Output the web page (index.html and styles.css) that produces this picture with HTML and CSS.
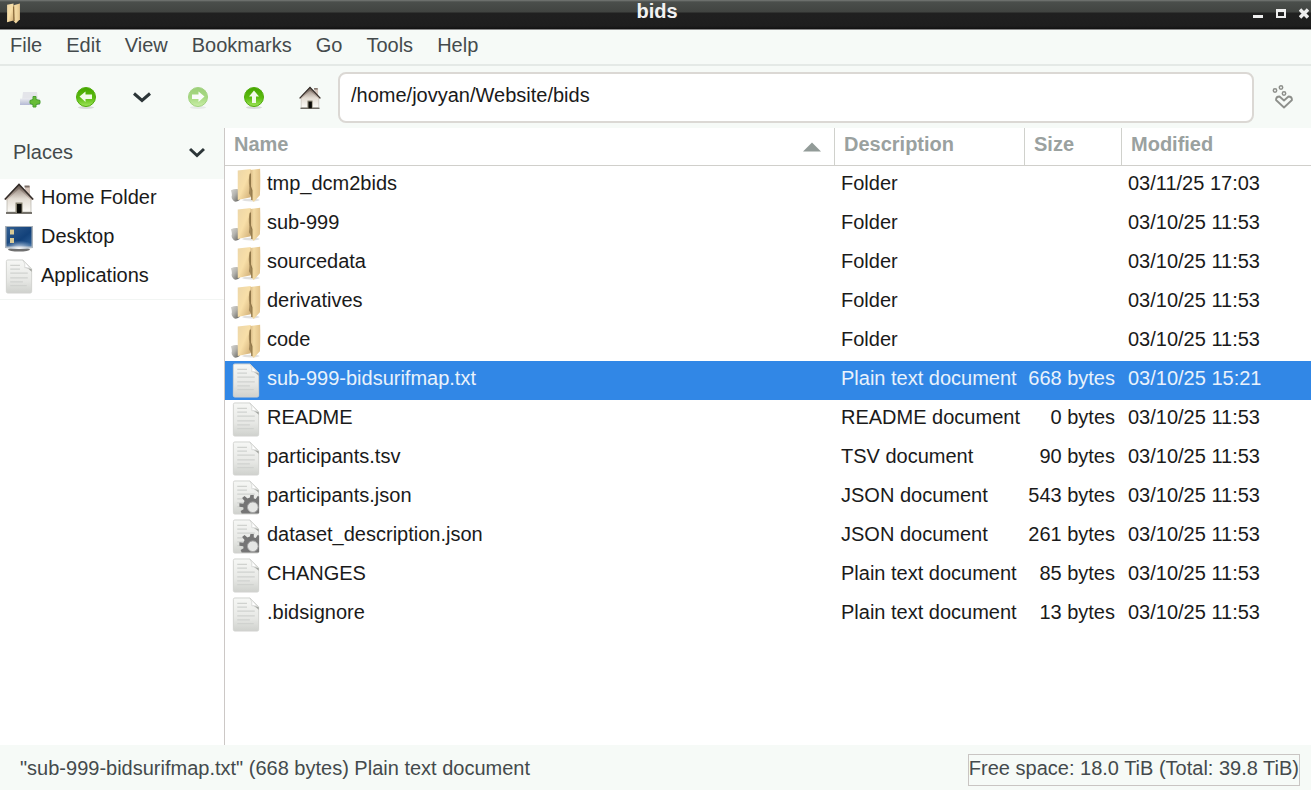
FILE: index.html
```
<!DOCTYPE html>
<html lang="en">
<head>
<meta charset="utf-8">
<title>bids</title>
<link rel="stylesheet" href="styles.css">
</head>
<body>
<svg class="defs" aria-hidden="true">
  <defs>
    <linearGradient id="wood" x1="0" y1="0" x2="1" y2="1"><stop offset="0" stop-color="#ecd6a8"/><stop offset=".5" stop-color="#f8dfa8"/><stop offset="1" stop-color="#cdaa72"/></linearGradient>
    <linearGradient id="woodDark" x1="0" y1="0" x2="1" y2="0"><stop offset="0" stop-color="#d9bb87"/><stop offset=".35" stop-color="#f3dba5"/><stop offset="1" stop-color="#e2c28a"/></linearGradient>
    <linearGradient id="ball" x1="0" y1="0" x2="1" y2="1"><stop offset="0" stop-color="#d6d5d1"/><stop offset=".45" stop-color="#b3b2ad"/><stop offset="1" stop-color="#5c5b57"/></linearGradient>
    <linearGradient id="paper" x1="0" y1="0" x2="0" y2="1"><stop offset="0" stop-color="#f6f7f5"/><stop offset=".6" stop-color="#e7e8e5"/><stop offset="1" stop-color="#cfd1cd"/></linearGradient>
    <linearGradient id="green" x1="0" y1="0" x2="0" y2="1"><stop offset="0" stop-color="#45a500"/><stop offset=".55" stop-color="#5cbc10"/><stop offset="1" stop-color="#a0e55c"/></linearGradient>
    <linearGradient id="roof" x1="0" y1="0" x2="0" y2="1"><stop offset="0" stop-color="#5e5149"/><stop offset="1" stop-color="#d5c5bb"/></linearGradient>
    <linearGradient id="wall" x1="0" y1="0" x2="0" y2="1"><stop offset="0" stop-color="#8d7d73"/><stop offset=".5" stop-color="#e4ddd4"/><stop offset="1" stop-color="#fbfaf6"/></linearGradient>
    <linearGradient id="screen" x1="0" y1="0" x2="1" y2="1"><stop offset="0" stop-color="#335f91"/><stop offset=".6" stop-color="#12417a"/><stop offset="1" stop-color="#2e6199"/></linearGradient>
    <radialGradient id="glow" cx=".5" cy="1" r=".6"><stop offset="0" stop-color="#fff"/><stop offset="1" stop-color="#b8cce2" stop-opacity="0"/></radialGradient>
    <linearGradient id="tray" x1="0" y1="0" x2="0" y2="1"><stop offset="0" stop-color="#e9eaf0"/><stop offset=".5" stop-color="#cfd2e0"/><stop offset="1" stop-color="#b4b9d6"/></linearGradient>
  </defs>
  <symbol id="folder" viewBox="0 0 30 36">
    <ellipse cx="20" cy="33" rx="9" ry="1.500" fill="#000" opacity=".12"/>
    <path d="M-.5 23q4-2 9-1v11q-5 3.500-7 0-2-2-1-5 0-2-1-5z" fill="url(#ball)"/>
    <path d="M6.500 2.500 20 1v29L6.500 33z" fill="url(#wood)"/>
    <path d="M19.500 5q-2 4-1.500 11 1 3 0 10l3 5V5z" fill="#a08658"/>
    <path d="M19.500 2 29.500 .7q.5 14-.2 27.300L23 35l-2-2V23l-1.500-3z" fill="url(#woodDark)"/>
    <path d="M19.500 6v13l1.500 4v10" fill="none" stroke="#8f7648" stroke-width="1.300"/>
  </symbol>
  <symbol id="file" viewBox="0 0 28 36">
    <path d="M1 2.500Q1 1 2.500 1H18l9 9v23.500q0 1.500-1.500 1.500h-23Q1 35 1 33.500z" fill="url(#paper)" stroke="#d2d3d0"/>
    <path d="M18 1q3 4 2 8 4-1 7 2z" fill="#fff" stroke="#d0d1ce" stroke-width=".7"/>
    <path d="m19.500 8.500 7.500 2v2.500q-3-3.500-7.500-4.500z" fill="#777a75" opacity=".6"/>
    <path d="M5 6.500h10M5 10.500h10M5 14.500h18M5 19.500h18M5 23.500h13M5 27.500h17" stroke="#d0d2cf" stroke-width="1.300"/>
  </symbol>
  <symbol id="gearfile" viewBox="0 0 28 36">
    <use href="#file"/>
    <path d="M18.500 15.500h3.500v3.500l2 .5 2-3 1.500.5V34q0 .5-1 .5H9.500l-1-2.500 3-2-.3-2-4-.5v-3.500l4 .5 1.300-3-2.500-3 2.500-2 3 2.500 2.500-1z" fill="#757575"/>
    <circle cx="21" cy="28" r="5.500" fill="#e5e6e4" stroke="#a2a2a2"/>
  </symbol>
  <symbol id="house" viewBox="0 0 30 32">
    <path d="M21 3h5v9h-5z" fill="#d5c5bb"/><path d="M20.500 2.500h5v2h-5z" fill="#7b6e67"/>
    <path d="M3 14 15 3l12 12v14H3z" fill="url(#wall)" stroke="#aaa49b" stroke-width=".6"/>
    <path d="M15 1 .5 16l2 1.500L15 6l12.500 11.500 2-1.500z" fill="url(#roof)"/>
    <path d="M.8 16.500 15 1.500l14.200 15" fill="none" stroke="#342d29" stroke-width="1.600"/>
    <path d="M2 30h26" stroke="#56524a" stroke-width="1.600"/>
    <path d="M11.500 19.500h7V30h-7z" fill="#85806f"/><path d="M13 21h4.500v9H13z" fill="#090906"/>
  </symbol>
  <symbol id="desktop" viewBox="0 0 30 28">
    <ellipse cx="15" cy="25.500" rx="11" ry="2" fill="#333" opacity=".7"/>
    <path d="M1 2h28v22q-14 2-28 0z" fill="#a9b1b8"/>
    <path d="M2.500 3h25v19.500h-25z" fill="url(#screen)"/>
    <path d="M1 11h28v13q-14 2-28 0z" fill="url(#glow)"/>
    <path d="M6 5.500h4v5H6zM6 14h4v5H6z" fill="#d9ca96"/>
  </symbol>
  <symbol id="orb" viewBox="0 0 22 24">
    <ellipse cx="11" cy="21.500" rx="8" ry="1.500" fill="#000" opacity=".12"/>
    <circle cx="11" cy="11" r="9.500" fill="url(#green)" stroke="#50ad0b"/>
  </symbol>
</svg>

<div class="window">
  <header class="titlebar">
    <svg class="title-icon" viewBox="6 0 24 36" aria-hidden="true"><path d="M7 3 18 1v29L7 33z" fill="url(#wood)"/><path d="M18 4 29 1v27l-7 7-4-4z" fill="url(#woodDark)"/><path d="m18 6 1 25" stroke="#8c6c3c" stroke-width="2"/></svg>
    <h1 class="title">bids</h1>
    <div class="window-buttons">
      <button aria-label="Minimize"><svg width="10" height="12"><path d="M0 8h10v3H0z" fill="#eee"/></svg></button>
      <button aria-label="Maximize"><svg width="10" height="12"><path d="M1 4h8v6H1z" fill="none" stroke="#eee" stroke-width="2"/><path d="M0 2h10v2H0z" fill="#eee"/></svg></button>
      <button aria-label="Close"><svg width="10" height="12"><path d="m1 2.500 8 8m0-8-8 8" stroke="#eee" stroke-width="3.500"/></svg></button>
    </div>
  </header>

  <nav class="menubar" aria-label="Menu">
    <button>File</button><button>Edit</button><button>View</button><button>Bookmarks</button><button>Go</button><button>Tools</button><button>Help</button>
  </nav>

  <div class="toolbar">
    <div class="tools">
      <button aria-label="New tab"><svg width="22" height="24"><path d="M4 6h14l1 8H3z" fill="#e4e5ea"/><path d="M1 12.500h20V19H1z" fill="url(#tray)"/><path d="M14 10.500h3v3l4 1v3l-4 1v2.500h-3V18.500l-3-1v-3l3-1z" fill="#68bd37" stroke="#4a9f30"/></svg></button>
      <button aria-label="Back"><svg width="22" height="24"><use href="#orb"/><path d="m4.500 10.500 6-5v3H17v4.500h-6.500v3z" fill="#f1fae9"/></svg></button>
      <button aria-label="History"><svg width="22" height="24"><path d="m3 7.500 8 7 8-7" fill="none" stroke="#2c3538" stroke-width="3"/></svg></button>
      <button aria-label="Forward" disabled><svg width="22" height="24" opacity=".5"><use href="#orb"/><path d="m17.500 10.500-6-5v3H5v4.500h6.500v3z" fill="#fff"/></svg></button>
      <button aria-label="Up"><svg width="22" height="24"><use href="#orb"/><path d="m11 4.500-5 6h3V17h4v-6.500h3z" fill="#f1fae9"/></svg></button>
      <button aria-label="Home"><svg width="22" height="24"><use href="#house"/></svg></button>
    </div>
    <input class="path" type="text" aria-label="Location" value="/home/jovyan/Website/bids" spellcheck="false">
    <button class="go" aria-label="Jump to"><svg width="22" height="26" fill="none" stroke="#8d8f8b" stroke-width="1.500"><circle cx="4" cy="6.500" r="1.700"/><circle cx="10" cy="3.500" r="1.700"/><circle cx="13" cy="9.500" r="1.700"/><path d="m13 16.500 4.500-4q3.500 0 3.500 3.500L13 23.500 5 16q0-3.500 3.500-3.500z" stroke-linejoin="round" stroke-width="1.800"/></svg></button>
  </div>

  <main class="content">
    <aside class="sidebar">
      <button class="places">Places<svg width="16" height="12" aria-hidden="true"><path d="m1 3 7 6.500L15 3" fill="none" stroke="#2c3538" stroke-width="3"/></svg></button>
      <ul class="place-list">
        <li><a href="#home"><svg class="house-icon"><use href="#house"/></svg><span>Home Folder</span></a></li>
        <li><a href="#desktop"><svg class="desktop-icon"><use href="#desktop"/></svg><span>Desktop</span></a></li>
        <li><a href="#applications"><svg class="file-icon"><use href="#file"/></svg><span>Applications</span></a></li>
      </ul>
    </aside>
    <section class="files" aria-label="Files">
      <table>
        <colgroup><col><col class="c-desc"><col class="c-size"><col class="c-mod"></colgroup>
        <thead><tr>
          <th aria-sort="ascending"><button>Name<svg class="sort" width="18" height="12" aria-hidden="true"><path d="M0 11.500 9 2.500l9 9z" fill="#929b98"/></svg></button></th>
          <th><button>Description</button></th><th><button>Size</button></th><th><button>Modified</button></th>
        </tr></thead>
        <tbody>
          <tr><td><svg class="icon"><use href="#folder"/></svg><span>tmp_dcm2bids</span></td><td>Folder</td><td></td><td>03/11/25 17:03</td></tr>
          <tr><td><svg class="icon"><use href="#folder"/></svg><span>sub-999</span></td><td>Folder</td><td></td><td>03/10/25 11:53</td></tr>
          <tr><td><svg class="icon"><use href="#folder"/></svg><span>sourcedata</span></td><td>Folder</td><td></td><td>03/10/25 11:53</td></tr>
          <tr><td><svg class="icon"><use href="#folder"/></svg><span>derivatives</span></td><td>Folder</td><td></td><td>03/10/25 11:53</td></tr>
          <tr><td><svg class="icon"><use href="#folder"/></svg><span>code</span></td><td>Folder</td><td></td><td>03/10/25 11:53</td></tr>
          <tr class="selected"><td><svg class="icon"><use href="#file"/></svg><span>sub-999-bidsurifmap.txt</span></td><td>Plain text document</td><td>668 bytes</td><td>03/10/25 15:21</td></tr>
          <tr><td><svg class="icon"><use href="#file"/></svg><span>README</span></td><td>README document</td><td>0 bytes</td><td>03/10/25 11:53</td></tr>
          <tr><td><svg class="icon"><use href="#file"/></svg><span>participants.tsv</span></td><td>TSV document</td><td>90 bytes</td><td>03/10/25 11:53</td></tr>
          <tr><td><svg class="icon"><use href="#gearfile"/></svg><span>participants.json</span></td><td>JSON document</td><td>543 bytes</td><td>03/10/25 11:53</td></tr>
          <tr><td><svg class="icon"><use href="#gearfile"/></svg><span>dataset_description.json</span></td><td>JSON document</td><td>261 bytes</td><td>03/10/25 11:53</td></tr>
          <tr><td><svg class="icon"><use href="#file"/></svg><span>CHANGES</span></td><td>Plain text document</td><td>85 bytes</td><td>03/10/25 11:53</td></tr>
          <tr><td><svg class="icon"><use href="#file"/></svg><span>.bidsignore</span></td><td>Plain text document</td><td>13 bytes</td><td>03/10/25 11:53</td></tr>
        </tbody>
      </table>
    </section>
  </main>

  <footer class="statusbar">
    <span>"sub-999-bidsurifmap.txt" (668 bytes) Plain text document</span>
    <span class="space">Free space: 18.0 TiB (Total: 39.8 TiB)</span>
  </footer>
</div>
</body>
</html>
```
FILE: styles.css
```
* { box-sizing: border-box; }
body {
  margin: 0;
  font: 20px/24px "Liberation Sans", Arial, sans-serif;
  color: #1a1a1a;
  background: #f6faf7;
}
button, input { font: inherit; color: inherit; }
button { display: flex; align-items: center; padding: 0; border: 0; background: none; }
a { color: inherit; text-decoration: none; }
svg { display: block; flex: none; }
.defs { position: absolute; width: 0; height: 0; }

.window { display: flex; flex-direction: column; min-height: 100vh; }

.titlebar {
  display: grid;
  grid-template-columns: 1fr auto 1fr;
  align-items: center;
  height: 30px;
  padding: 0 2px 4px 5px;
  background: linear-gradient(#777a77 0, #4a4e4b 2px, #414441 12px, #202020 13px, #1e1e1e 26px, #111 29px, #8b8b8b 29px);
  color: #f2f2f2;
}
.title-icon { width: 17px; height: 21px; }
.title { margin: 0; padding-bottom: 4px; font-size: 20px; line-height: 22px; }
.window-buttons { display: flex; gap: 13px; justify-content: flex-end; }

.menubar {
  display: flex;
  gap: 24px;
  height: 36px;
  padding: 0 10px 4px;
  border-bottom: 2px solid #e4e9e6;
  color: #444a4c;
}

.toolbar { display: flex; align-items: center; gap: 17px; height: 62px; padding: 0 18px 0 19px; }
.tools { display: flex; gap: 34px; padding-top: 1px; }
.path {
  flex: 1;
  min-width: 0;
  height: 51px;
  padding: 0 11px 4px;
  border: 2px solid #dbd8d4;
  border-radius: 8px;
  background: #fff;
}

.content { display: flex; flex: 1; }
.sidebar { width: 224px; flex: none; background: #fff; }
.places {
  justify-content: space-between;
  width: 100%;
  height: 51px;
  padding: 0 19px 3px 13px;
  background: #f6faf7;
  color: #444a4c;
}
.place-list { margin: 0; padding: 0 0 3px; border-bottom: 1px solid #f2f5f3; list-style: none; }
.place-list a { display: grid; grid-template-columns: 30px 1fr; align-items: center; gap: 7px; height: 39px; padding: 0 4px; }
.place-list span { padding-bottom: 4px; }
.house-icon { width: 30px; height: 32px; }
.desktop-icon { width: 30px; height: 28px; }
.file-icon { width: 30px; height: 35px; }

.files { flex: 1; min-width: 0; border-left: 1px solid #ccc8c6; background: #fff; }
table { width: 100%; border-spacing: 0; table-layout: fixed; }
.c-desc { width: 190px; }
.c-size { width: 97px; }
.c-mod { width: 190px; }
th { height: 38px; padding: 0; border-bottom: 1px solid #d0cfcb; color: #9aa19f; }
th + th { border-left: 1px solid #d0d1cc; }
th button { justify-content: space-between; width: 100%; padding: 0 13px 5px 9px; font-weight: bold; }
.sort { margin-top: 3px; }
td { height: 39px; padding: 0 6px 5px 7px; white-space: nowrap; }
td:first-child { display: flex; align-items: center; gap: 6px; padding: 0 6px; }
td:first-child span { padding-bottom: 5px; }
td:nth-child(3) { padding-left: 0; text-align: right; }
.icon { width: 30px; height: 35px; }
.selected { background: #3187e6; color: #e9f2fc; }

.statusbar {
  display: flex;
  align-items: center;
  justify-content: space-between;
  height: 45px;
  padding: 5px 11px 0 20px;
  color: #444a4c;
}
.statusbar span { padding-bottom: 4px; }
.statusbar .space { padding: 1px 0 5px; border: 1px solid #c9c5c3; }
```
